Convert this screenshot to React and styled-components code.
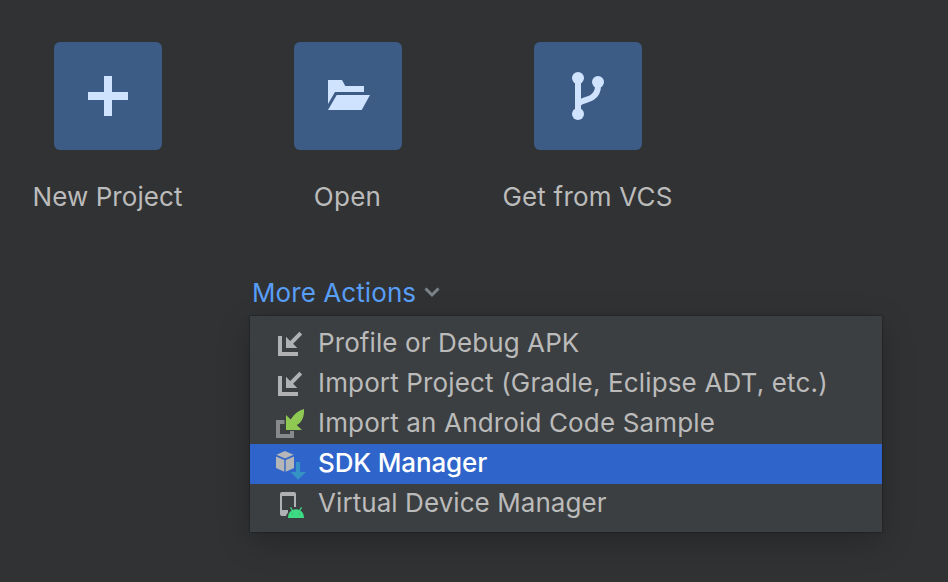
import React from "react";
import styled, { createGlobalStyle } from "styled-components";

const GlobalStyle = createGlobalStyle`
  * { box-sizing: border-box; }
  body {
    margin: 0;
    background: #313234;
    font-family: Inter, "Liberation Sans", sans-serif;
    font-size: 26px;
    overflow: hidden;
  }
`;

const Screen = styled.main`
  height: 582px;
  padding-top: 42px;
  background: #313234;
  color: #bbbbbb;
  overflow: hidden;
`;

const QuickActions = styled.div`
  display: grid;
  grid-template-columns: repeat(3, 240px);
  margin-left: -12px;
`;

const QuickAction = styled.div`
  display: flex;
  flex-direction: column;
  align-items: center;
`;

const Tile = styled.div`
  width: 108px;
  height: 108px;
  border-radius: 6px;
  background: #3d5c85;

  svg { display: block; }
`;

const TileLabel = styled.span`
  margin-top: 27px;
  line-height: 40px;
  white-space: nowrap;
  letter-spacing: ${(p) => p.$spacing}px;
  transform: translateX(-0.5px);
`;

const MoreActions = styled.div`
  display: flex;
  align-items: center;
  gap: 8px;
  height: 40px;
  margin: 55px 0 4px 252px;
  color: #589df6;
  letter-spacing: 0.08px;
`;

const Menu = styled.div`
  width: 632px;
  height: 216px;
  margin-left: 250px;
  padding: 8px 0;
  background: #3c3f41;
  box-shadow: 0 0 2px rgba(0, 0, 0, 0.55), 0 10px 30px rgba(0, 0, 0, 0.22);
`;

const MenuItem = styled.div`
  display: flex;
  align-items: center;
  gap: 12px;
  height: 40px;
  padding-left: 24px;
  white-space: nowrap;
  letter-spacing: ${(p) => p.$spacing}px;
  font-weight: ${(p) => (p.$selected ? 500 : 400)};
  color: ${(p) => (p.$selected ? "#ffffff" : "#bbbbbb")};
  background: ${(p) => (p.$selected ? "#2f65ca" : "transparent")};

  svg { flex: none; }
`;

const MenuText = styled.span`
  line-height: 40px;
  transform: translateY(-1px);
`;

const TileIcon = ({ children }) => (
  <svg width="108" height="108" fill="#cfe3ff">{children}</svg>
);

const PlusIcon = () => (
  <TileIcon><path d="M50 34h8v16h16v8H58v16h-8V58H34v-8h16z" /></TileIcon>
);

const FolderIcon = () => (
  <TileIcon>
    <path d="M34 38h14l3.3 6H70v6H41L34 62z" />
    <path d="M42.7 53H76L67.7 68H34z" />
  </TileIcon>
);

const BranchIcon = () => (
  <TileIcon>
    <circle cx="44" cy="36" r="6" />
    <circle cx="64" cy="40" r="6" />
    <circle cx="44" cy="72" r="6" />
    <path d="M44 36v36M64 40v4c0 6-2 9-6 11.5C54 58 49 58 44 61.5" fill="none" stroke="#cfe3ff" strokeWidth="6" />
  </TileIcon>
);

const MenuIcon = ({ children }) => (
  <svg width="32" height="32" viewBox="0 0 32 32">{children}</svg>
);

const ImportIcon = () => (
  <MenuIcon>
    <path d="M4 8h4v16h16v4H4z" fill="#afb1b3" />
    <path d="M12 8.7V20h11.3l-4.2-4.2L28.2 6.6l-2.8-2.8-9.2 9.1z" fill="#afb1b3" />
  </MenuIcon>
);

const SampleIcon = () => (
  <MenuIcon>
    <path d="M2 12h8.5v4H6v10h10v-3h4v7H2z" fill="#87898b" />
    <path d="M12 7v15h16l-5.3-4.9C28 14.2 30.5 8.5 30 1c-5.5 1.7-10 5-13.3 10.5z" fill="#8fc853" />
  </MenuIcon>
);

const SdkIcon = () => (
  <MenuIcon>
    <path d="M11 3l8.6 3.8L11 10.6 2.4 6.8z" fill="#b4b6b8" />
    <path d="M2 8.4l8.3 3.7v11.6L2 20z" fill="#b4b6b8" />
    <path d="M20 8.4l-8.3 3.7v11.6L20 20z" fill="#b4b6b8" />
    <path d="M22 14h4v10h6l-8 7.7L16.5 24H22z" fill="#3592c4" />
  </MenuIcon>
);

const DeviceIcon = () => (
  <MenuIcon>
    <path d="M8 4h12q2 0 2 2v13h-2V8H8v14h6v2.5q-1.5 1.5-2 3.5H8q-2 0-2-2V6q0-2 2-2z" fill="#afb1b3" />
    <path d="M14 30c0-3.8 1.4-6.2 3.7-7.5L16 19.8l1-.7 1.9 2.8c2-.8 4.3-.8 6.3 0l1.9-2.8 1 .7-1.8 2.7C28.6 23.8 30 26.2 30 30z" fill="#3ddc84" />
    <path d="M17.8 26h1.4M24.8 26h1.4" stroke="#35a768" strokeWidth="1" />
  </MenuIcon>
);

const quickActions = [
  { label: "New Project", Icon: PlusIcon, spacing: 0.07 },
  { label: "Open", Icon: FolderIcon, spacing: 0.25 },
  { label: "Get from VCS", Icon: BranchIcon, spacing: 0.2 },
];

const menuItems = [
  { label: "Profile or Debug APK", Icon: ImportIcon, spacing: 0.1 },
  { label: "Import Project (Gradle, Eclipse ADT, etc.)", Icon: ImportIcon, spacing: 0.15 },
  { label: "Import an Android Code Sample", Icon: SampleIcon, spacing: 0.15 },
  { label: "SDK Manager", Icon: SdkIcon, spacing: -0.15, selected: true },
  { label: "Virtual Device Manager", Icon: DeviceIcon, spacing: 0.07 },
];

export default function App() {
  return (
    <Screen>
      <GlobalStyle />
      <QuickActions>
        {quickActions.map(({ label, Icon, spacing }) => (
          <QuickAction key={label}>
            <Tile><Icon /></Tile>
            <TileLabel $spacing={spacing}>{label}</TileLabel>
          </QuickAction>
        ))}
      </QuickActions>
      <MoreActions>
        <span>More Actions</span>
        <svg width="16" height="12" fill="none" stroke="#7b8288" strokeWidth="3">
          <path d="M1.5 2.5L8 9l6.5-6.5" />
        </svg>
      </MoreActions>
      <Menu>
        {menuItems.map(({ label, Icon, spacing, selected }) => (
          <MenuItem key={label} $spacing={spacing} $selected={selected}>
            <Icon />
            <MenuText>{label}</MenuText>
          </MenuItem>
        ))}
      </Menu>
    </Screen>
  );
}
